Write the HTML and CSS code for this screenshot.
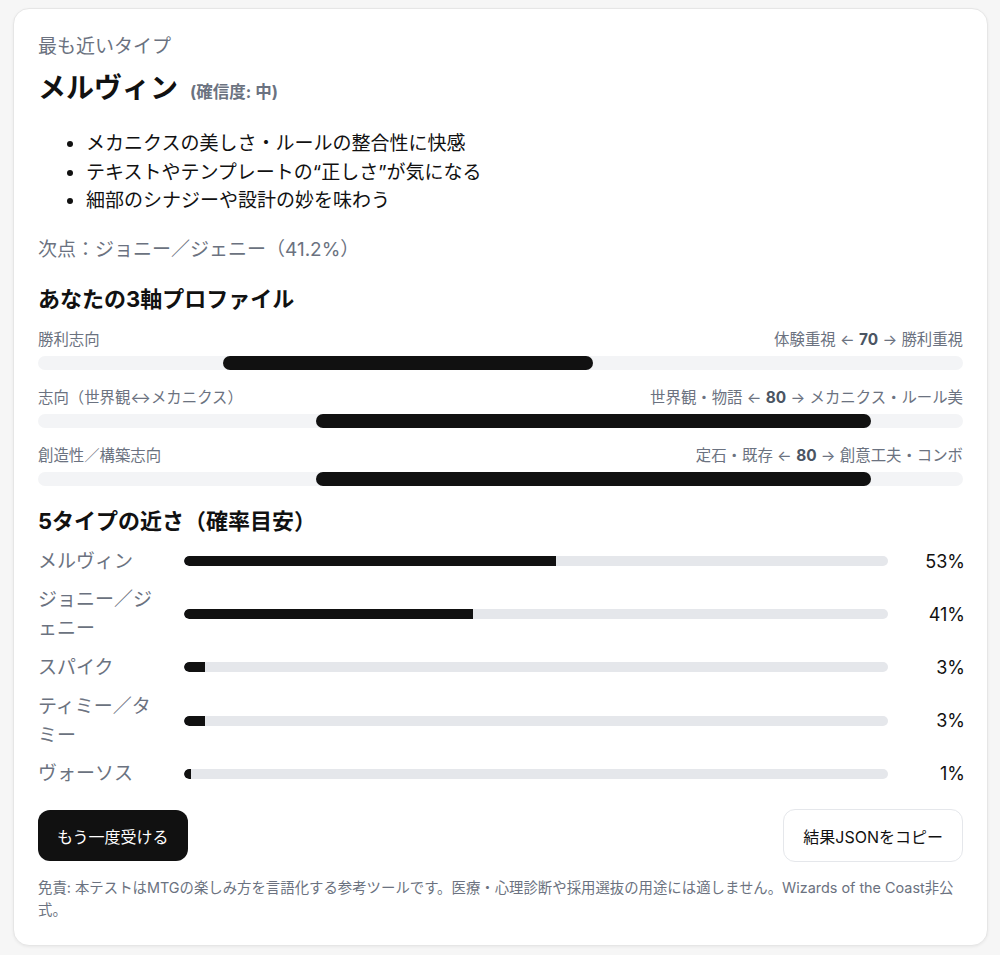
FILE: index.html
```html
<!DOCTYPE html>
<html lang="ja">
<head>
<meta charset="utf-8">
<title>結果</title>
<link rel="stylesheet" href="styles.css">
</head>
<body>
<main class="card">
  <div class="eyebrow">最も近いタイプ</div>
  <h1 class="type-title">メルヴィン <span class="confidence">(確信度: 中)</span></h1>
  <ul class="traits">
    <li>メカニクスの美しさ・ルールの整合性に快感</li>
    <li>テキストやテンプレートの“正しさ”が気になる</li>
    <li>細部のシナジーや設計の妙を味わう</li>
  </ul>
  <p class="runner-up">次点：ジョニー／ジェニー（41.2%）</p>

  <h2 class="section-title">あなたの3軸プロファイル</h2>
  <div class="axes">
    <div class="axis">
      <div class="axis-head"><span>勝利志向</span><span>体験重視 ← <b>70</b> → 勝利重視</span></div>
      <div class="axis-track"><div class="axis-fill" style="margin-left:20%;width:40%"></div></div>
    </div>
    <div class="axis">
      <div class="axis-head"><span>志向（世界観↔メカニクス）</span><span>世界観・物語 ← <b>80</b> → メカニクス・ルール美</span></div>
      <div class="axis-track"><div class="axis-fill" style="margin-left:30%;width:60%"></div></div>
    </div>
    <div class="axis">
      <div class="axis-head"><span>創造性／構築志向</span><span>定石・既存 ← <b>80</b> → 創意工夫・コンボ</span></div>
      <div class="axis-track"><div class="axis-fill" style="margin-left:30%;width:60%"></div></div>
    </div>
  </div>

  <h2 class="section-title types-title">5タイプの近さ（確率目安）</h2>
  <div class="types">
    <div class="type-name">メルヴィン</div>
    <div class="type-track"><div class="type-fill" style="width:52.9%"></div></div>
    <div class="type-pct">53%</div>

    <div class="type-name">ジョニー／ジェニー</div>
    <div class="type-track"><div class="type-fill" style="width:41%"></div></div>
    <div class="type-pct">41%</div>

    <div class="type-name">スパイク</div>
    <div class="type-track"><div class="type-fill" style="width:3%"></div></div>
    <div class="type-pct">3%</div>

    <div class="type-name">ティミー／タミー</div>
    <div class="type-track"><div class="type-fill" style="width:3%"></div></div>
    <div class="type-pct">3%</div>

    <div class="type-name">ヴォーソス</div>
    <div class="type-track"><div class="type-fill" style="width:1%"></div></div>
    <div class="type-pct">1%</div>
  </div>

  <div class="actions">
    <button class="btn btn-primary">もう一度受ける</button>
    <button class="btn btn-outline">結果JSONをコピー</button>
  </div>

  <p class="disclaimer">免責: 本テストはMTGの楽しみ方を言語化する参考ツールです。医療・心理診断や採用選抜の用途には適しません。Wizards of the Coast非公式。</p>
</main>
</body>
</html>
```

FILE: styles.css
```css
* { box-sizing: border-box; }

html, body {
  margin: 0;
  background: #f6f6f6;
}

body {
  padding: 8px 12px 10px 13px;
  font-family: "Inter", "Noto Sans CJK JP", sans-serif;
  color: #111111;
}

.card {
  width: 975px;
  background: #ffffff;
  border: 1px solid #e6e6e6;
  border-radius: 16px;
  box-shadow: 0 1px 3px rgba(0, 0, 0, 0.06);
  padding: 23px 24px 24px 24px;
}

.eyebrow {
  font-size: 19px;
  line-height: 29px;
  color: #6b7280;
}

.type-title {
  margin: 9px 0 0;
  font-size: 28px;
  line-height: 36px;
  font-weight: 700;
  display: flex;
  align-items: baseline;
  gap: 12px;
}

.confidence {
  font-size: 16.5px;
  font-weight: 700;
  color: #6b7280;
}

.traits {
  margin: 20px 0 0;
  padding-left: 48px;
  font-size: 19px;
  line-height: 28.6px;
}

.runner-up {
  margin: 19px 0 0;
  font-size: 19px;
  line-height: 29px;
  color: #6b7280;
}

.section-title {
  margin: 21px 0 0;
  font-size: 22px;
  line-height: 29px;
  font-weight: 700;
}

.axes {
  margin-top: 15px;
  display: flex;
  flex-direction: column;
  gap: 17px;
}

.axis-head {
  display: flex;
  justify-content: space-between;
  font-size: 15.4px;
  line-height: 22px;
  color: #6b7280;
}

.axis-head b {
  font-weight: 700;
  color: #4b5563;
}

.axis-track {
  margin-top: 5px;
  height: 14px;
  border-radius: 7px;
  background: #f3f4f6;
  display: flex;
}

.axis-fill {
  height: 14px;
  border-radius: 7px;
  background: #111111;
}

.types-title {
  margin-top: 21px;
}

.types {
  margin-top: 11px;
  display: grid;
  grid-template-columns: 128px 1fr 57px;
  column-gap: 18px;
  row-gap: 9.6px;
  align-items: center;
}

.type-name {
  font-size: 19px;
  line-height: 29px;
  color: #6b7280;
}

.type-track {
  height: 10px;
  border-radius: 5px;
  background: #e5e7eb;
  overflow: hidden;
}

.type-fill {
  height: 100%;
  background: #111111;
  border-radius: 5px 0 0 5px;
}

.type-pct {
  font-size: 18px;
  line-height: 29px;
  text-align: right;
  color: #111111;
  margin-right: -2px;
}

.actions {
  margin-top: 21px;
  display: flex;
  justify-content: space-between;
  align-items: center;
}

.btn {
  font-family: inherit;
  font-size: 16px;
  font-weight: 400;
  border-radius: 12px;
  cursor: pointer;
}

.btn-primary {
  height: 51px;
  padding: 0 19px;
  background: #111111;
  color: #ffffff;
  border: none;
}

.btn-outline {
  height: 53px;
  padding: 0 19px;
  background: #ffffff;
  color: #111111;
  border: 1px solid #e5e7eb;
}

.disclaimer {
  margin: 15px 0 0;
  font-size: 14.4px;
  line-height: 22px;
  color: #6b7280;
}
```
